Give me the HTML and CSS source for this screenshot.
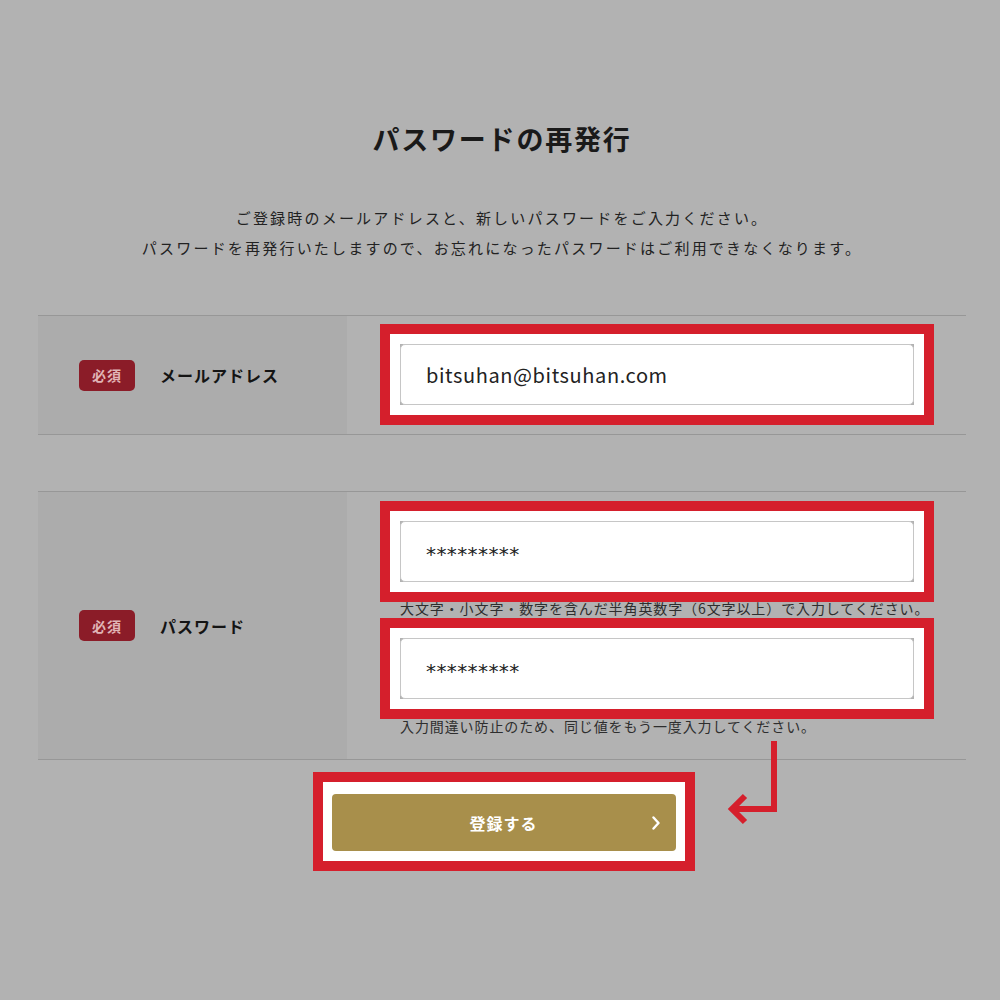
FILE: index.html
```html
<!DOCTYPE html>
<html lang="ja">
<head>
<meta charset="utf-8">
<title>パスワードの再発行</title>
<link rel="stylesheet" href="styles.css">
</head>
<body>
<main class="page">
  <h1 class="title">パスワードの再発行</h1>
  <p class="lead">ご登録時のメールアドレスと、新しいパスワードをご入力ください。<br>パスワードを再発行いたしますので、お忘れになったパスワードはご利用できなくなります。</p>

  <div class="form">
    <div class="row">
      <div class="label-cell">
        <span class="badge">必須</span>
        <span class="label">メールアドレス</span>
      </div>
      <div class="field-cell">
        <div class="hl"><div class="input">bitsuhan@bitsuhan.com</div></div>
      </div>
    </div>

    <div class="row">
      <div class="label-cell">
        <span class="badge">必須</span>
        <span class="label">パスワード</span>
      </div>
      <div class="field-cell pw-cell">
        <div class="hl"><div class="input input-pw">*********</div></div>
        <p class="hint hint-1">大文字・小文字・数字を含んだ半角英数字（6文字以上）で入力してください。</p>
        <div class="hl hl-2"><div class="input input-pw">*********</div></div>
        <p class="hint hint-2">入力間違い防止のため、同じ値をもう一度入力してください。</p>
      </div>
    </div>
  </div>

  <div class="actions">
    <div class="btn-frame">
      <button class="btn" type="button">
        <span>登録する</span>
        <svg class="chev" width="8" height="14" viewBox="0 0 8 14"><polyline points="1.5,1.5 6.5,7 1.5,12.5" fill="none" stroke="#fff" stroke-width="2.4" stroke-linecap="round" stroke-linejoin="round"/></svg>
      </button>
    </div>
    <svg class="arrow" width="60" height="95" viewBox="0 0 60 95">
      <rect x="51" y="7" width="6" height="71" fill="#d51f2c"/>
      <rect x="12" y="72" width="45" height="6" fill="#d51f2c"/>
      <polyline points="25,62 12,75 25,88" fill="none" stroke="#d51f2c" stroke-width="6"/>
    </svg>
  </div>
</main>
</body>
</html>
```

FILE: styles.css
```css
body {
  margin: 0;
  background: #b2b2b2;
  font-family: "Noto Sans CJK JP", "Noto Sans", sans-serif;
  color: #1a1a1a;
}

.page {
  margin-left: 38px;
  width: 928px;
  padding-top: 119px;
  padding-bottom: 100px;
}

.title {
  margin: 0;
  text-align: center;
  font-size: 27px;
  line-height: 40px;
  font-weight: 700;
  letter-spacing: 1.8px;
}

.lead {
  margin: 44px 0 0;
  text-align: center;
  font-size: 15px;
  line-height: 30px;
  letter-spacing: 2.2px;
  color: #222;
}

.form {
  margin-top: 52px;
}

.row {
  display: flex;
  border-top: 1px solid #979797;
  border-bottom: 1px solid #979797;
}

.row + .row {
  margin-top: 56px;
}

.label-cell {
  width: 309px;
  flex: none;
  box-sizing: border-box;
  background: #acacac;
  display: flex;
  align-items: center;
  padding-left: 41px;
}

.badge {
  width: 56px;
  height: 31px;
  border-radius: 5px;
  background: #8b1c28;
  color: #e0b4b6;
  font-size: 14px;
  font-weight: 700;
  letter-spacing: 1px;
  display: flex;
  align-items: center;
  justify-content: center;
}

.label {
  margin-left: 25px;
  font-size: 16px;
  font-weight: 700;
  letter-spacing: 1px;
  color: #141414;
}

.field-cell {
  flex: 1;
  min-width: 0;
  padding: 28px 52px 29px 53px;
}

.pw-cell {
  padding-top: 29px;
  padding-bottom: 23px;
}

.hl {
  position: relative;
  z-index: 1;
  box-shadow: 0 0 0 10px #fff, 0 0 0 20px #d51f2c;
}

.hl-2 {
  margin-top: 20px;
}

.input {
  height: 61px;
  box-sizing: border-box;
  border: 1px solid #c6c6c6;
  border-radius: 5px;
  background: #fff;
  display: flex;
  align-items: center;
  padding-left: 25px;
  font-size: 20px;
  letter-spacing: 0.6px;
  color: #222;
}

.input-pw {
  font-family: "DejaVu Sans", sans-serif;
  font-size: 20px;
  letter-spacing: 0.4px;
  padding-top: 5px;
}

.hint {
  margin: 0;
  font-size: 14px;
  line-height: 20px;
  letter-spacing: 0.9px;
  color: #2e2e2e;
  white-space: nowrap;
}

.hint-1 {
  margin-top: 16px;
}

.hint-2 {
  margin-top: 17px;
}

.actions {
  position: relative;
  display: flex;
  justify-content: center;
  margin-top: 12px;
  padding-left: 3px;
}

.btn-frame {
  border: 10px solid #d51f2c;
  background: #fff;
  padding: 12px 9px 10px;
}

.btn {
  position: relative;
  width: 344px;
  height: 57px;
  border: 0;
  border-radius: 4px;
  background: #a88f4b;
  color: #fff;
  font-family: "Noto Sans CJK JP", "Noto Sans", sans-serif;
  font-size: 16px;
  font-weight: 700;
  letter-spacing: 1px;
  display: flex;
  align-items: center;
  justify-content: center;
  padding: 0;
}

.chev {
  position: absolute;
  right: 16px;
  top: 22px;
}

.arrow {
  position: absolute;
  left: 682px;
  top: -38px;
}
```
